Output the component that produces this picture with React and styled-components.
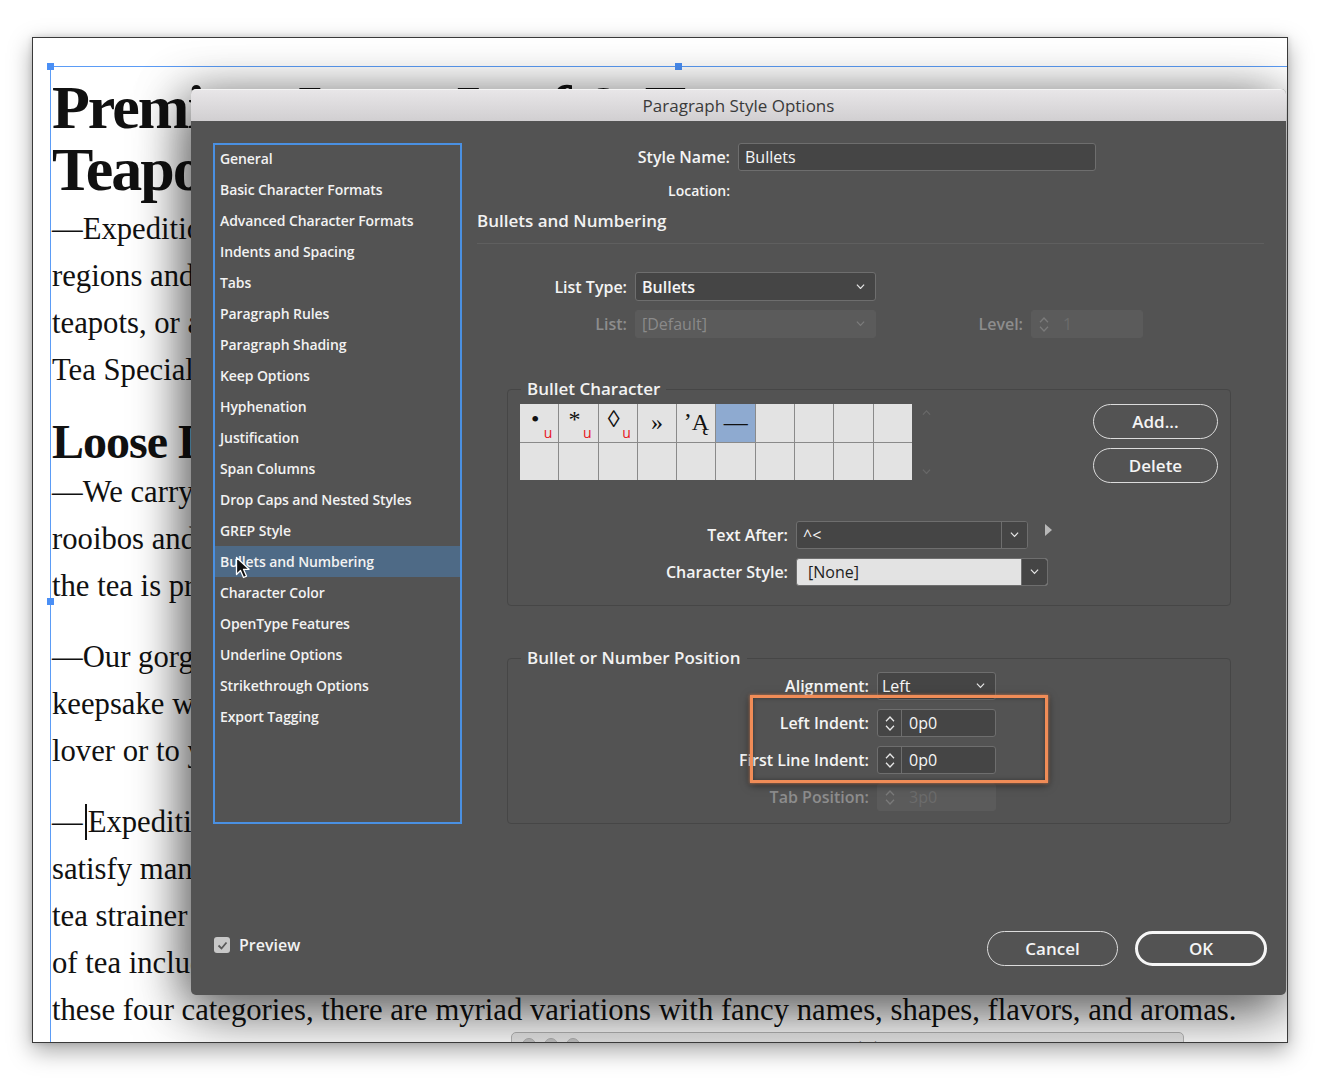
import React from 'react';
import styled, { createGlobalStyle } from 'styled-components';

const UI_FONT = `'Open Sans', 'Noto Sans', sans-serif`;
const DOC_FONT = `'Liberation Serif', 'Times New Roman', serif`;

const GlobalStyle = createGlobalStyle`
  html, body {
    margin: 0;
    padding: 0;
    background: #fff;
  }
  body {
    width: 1320px;
    height: 1080px;
    overflow: hidden;
  }
`;

/* ---------- document window ---------- */

const Window = styled.div`
  position: relative;
  box-sizing: border-box;
  width: 1256px;
  height: 1006px;
  margin: 37px 0 0 32px;
  border: 1px solid #3a3a3a;
  background: #fff;
  box-shadow: 0 8px 22px rgba(0, 0, 0, 0.35), 0 0 6px rgba(0, 0, 0, 0.15);
  overflow: hidden;
  display: flex;
  flex-direction: column;
`;

const TextFrame = styled.div`
  flex: 1;
  margin: 28px 0 0 17px;
  padding: 9px 0 0 1px;
  border-top: 1px solid #5b9cf6;
  border-left: 1px solid #5b9cf6;
  font-family: ${DOC_FONT};
  color: #111;
`;

const Headline = styled.h1`
  margin: 0;
  font-size: 62px;
  line-height: 62px;
  font-weight: 700;
  letter-spacing: -2px;
`;

const SubHead = styled.h2`
  margin: 21px 0 0;
  font-size: 48px;
  line-height: 54px;
  font-weight: 700;
  letter-spacing: -1px;
`;

const Para = styled.div`
  margin-top: ${({ $gap }) => $gap}px;
  font-size: 30.7px;
  line-height: 47px;
`;

const Line = styled.div`
  white-space: nowrap;
`;

const Caret = styled.span`
  display: inline-block;
  width: 2px;
  height: 36px;
  margin: 0 1px 0 2px;
  background: #111;
  vertical-align: -8px;
`;

const Handle = styled.div`
  position: absolute;
  left: ${({ $x }) => $x}px;
  top: ${({ $y }) => $y}px;
  width: 7px;
  height: 7px;
  background: #4a8ff5;
`;

const FindWindow = styled.div`
  position: absolute;
  left: 478px;
  top: 994px;
  width: 673px;
  height: 40px;
  box-sizing: border-box;
  border: 1px solid #b8b8b8;
  border-radius: 5px;
  background: linear-gradient(#ececec, #d4d4d4);
  display: flex;
  align-items: flex-start;
  padding: 5px 0 0 10px;
  gap: 8px;
  font: 12px ${UI_FONT};
  color: #888;
`;

const Light = styled.span`
  width: 12px;
  height: 12px;
  border-radius: 50%;
  background: #c4c4c4;
  border: 1px solid #b0b0b0;
`;

const FindTitle = styled.span`
  margin-left: 250px;
`;

/* ---------- dialog ---------- */

const Dialog = styled.div`
  position: absolute;
  left: 158px;
  top: 51px;
  width: 1095px;
  height: 906px;
  z-index: 2;
  display: flex;
  flex-direction: column;
  background: #535353;
  border-radius: 5px;
  box-shadow: 0 22px 55px rgba(0, 0, 0, 0.5), -10px 0 45px rgba(0, 0, 0, 0.35);
  font-family: ${UI_FONT};
  color: #f2f2f2;
`;

const TitleBar = styled.div`
  height: 32px;
  flex-shrink: 0;
  border-radius: 5px 5px 0 0;
  border-top: 1px solid #f4f4f4;
  box-sizing: border-box;
  background: linear-gradient(#e8e6e8, #d1cfd1);
  display: flex;
  align-items: center;
  justify-content: center;
  font-size: 17px;
  color: #3a3a3a;
`;

const DialogBody = styled.div`
  flex: 1;
  display: flex;
  flex-direction: column;
  padding: 22px 0 0 22px;
`;

const Main = styled.div`
  display: flex;
  gap: 15px;
`;

const Sidebar = styled.div`
  box-sizing: border-box;
  width: 249px;
  height: 681px;
  border: 2px solid #4a90e2;
`;

const SideList = styled.div`
  margin-top: -2px;
`;

const SideItem = styled.div`
  height: 31px;
  line-height: 31px;
  padding-left: 5px;
  font-size: 14px;
  font-weight: 600;
  letter-spacing: -0.1px;
  white-space: nowrap;
  background: ${({ $active }) => ($active ? '#4e6a86' : 'transparent')};
`;

const Panel = styled.div`
  width: 787px;
  display: flex;
  flex-direction: column;
`;

const Row = styled.div`
  display: flex;
  align-items: center;
  gap: 8px;
  margin-top: ${({ $gap }) => $gap || 0}px;
`;

const Label = styled.div`
  width: ${({ $w }) => $w}px;
  text-align: right;
  font-size: ${({ $small }) => ($small ? 14 : 16)}px;
  font-weight: 600;
  white-space: nowrap;
  color: ${({ $disabled }) => ($disabled ? '#8d8d8d' : '#f4f4f4')};
  line-height: 20px;
`;

const SectionTitle = styled.div`
  margin-top: 9px;
  font-size: 17px;
  font-weight: 600;
  line-height: 22px;
`;

const Separator = styled.div`
  margin-top: 11px;
  height: 1px;
  background: #5f5f5f;
`;

const Field = styled.div`
  box-sizing: border-box;
  width: ${({ $w }) => $w}px;
  height: ${({ $h }) => $h || 28}px;
  display: flex;
  align-items: center;
  border-radius: 3px;
  border: 1px solid ${({ $disabled }) => ($disabled ? '#5b5b5b' : '#6e6e6e')};
  background: ${({ $disabled, $light }) =>
    $disabled ? '#5b5b5b' : $light ? '#e3e3e3' : '#454545'};
  color: ${({ $disabled, $light }) =>
    $disabled ? '#8a8a8a' : $light ? '#1e1e1e' : '#f5f5f5'};
  font-size: 16px;
  font-weight: ${({ $bold }) => ($bold ? 600 : 400)};
  overflow: hidden;
`;

const FieldText = styled.span`
  flex: 1;
  padding-left: ${({ $pad }) => $pad || 6}px;
  white-space: nowrap;
`;

const FieldArrow = styled.span`
  width: 26px;
  display: flex;
  justify-content: center;
  padding-right: 2px;
`;

const DropPart = styled.span`
  align-self: stretch;
  width: 25px;
  display: flex;
  align-items: center;
  justify-content: center;
  background: #454545;
  border-left: 1px solid #6e6e6e;
`;

const SpinPart = styled.span`
  align-self: stretch;
  width: 23px;
  display: flex;
  flex-direction: column;
  align-items: center;
  justify-content: center;
  gap: 3px;
  border-right: 1px solid ${({ $disabled }) => ($disabled ? '#5b5b5b' : '#6e6e6e')};
`;

const Group = styled.fieldset`
  box-sizing: border-box;
  width: 724px;
  min-width: 0;
  margin: ${({ $gap }) => $gap}px 0 0 30px;
  padding: ${({ $pad }) => $pad};
  border: 1px solid #464646;
  border-radius: 4px;
`;

const Legend = styled.legend`
  margin-left: 1px;
  padding: 0 6px;
  font-size: 17px;
  font-weight: 600;
  line-height: 20px;
  color: #f2f2f2;
`;

const CharRow = styled.div`
  display: flex;
  align-items: flex-start;
`;

const CharGrid = styled.div`
  width: 392px;
  height: 76px;
  display: grid;
  grid-template-columns: repeat(10, 1fr);
  grid-template-rows: repeat(2, 1fr);
  gap: 1px;
  background: #8a8a8a;
`;

const CharCell = styled.div`
  position: relative;
  display: flex;
  align-items: center;
  justify-content: center;
  padding: ${({ $hasU }) => ($hasU ? '0 8px 6px 0' : '0')};
  background: ${({ $selected }) => ($selected ? '#8eaad0' : '#e3e3e3')};
  font-family: ${DOC_FONT};
  font-size: 24px;
  color: #111;
`;

const UMark = styled.span`
  position: absolute;
  right: 6px;
  bottom: 0;
  font: 14px ${UI_FONT};
  color: #e8141c;
`;

const GridScroll = styled.div`
  height: 76px;
  width: 24px;
  margin-left: 2px;
  display: flex;
  flex-direction: column;
  justify-content: space-between;
  align-items: center;
  padding: 6px 0;
  box-sizing: border-box;
`;

const ButtonCol = styled.div`
  margin-left: auto;
  display: flex;
  flex-direction: column;
  gap: 9px;
`;

const PillButton = styled.button`
  box-sizing: border-box;
  width: ${({ $w }) => $w}px;
  height: 35px;
  border-radius: 18px;
  border: ${({ $strong }) => ($strong ? '3px solid #f6f6f6' : '1.5px solid #dcdcdc')};
  background: transparent;
  color: #f4f4f4;
  font-family: ${UI_FONT};
  font-size: 17px;
  font-weight: 600;
  padding: 0;
`;

const MoreArrow = styled.span`
  margin: -10px 0 0 9px;
  width: 0;
  height: 0;
  border-top: 6px solid transparent;
  border-bottom: 6px solid transparent;
  border-left: 7px solid #b8b8b8;
`;

const Footer = styled.div`
  margin-top: auto;
  display: flex;
  align-items: center;
  padding: 0 19px 29px 1px;
`;

const CheckWrap = styled.label`
  display: flex;
  align-items: center;
  gap: 9px;
  margin-bottom: 7px;
  font-size: 16px;
  font-weight: 600;
`;

const CheckBox = styled.span`
  width: 16px;
  height: 16px;
  border-radius: 3px;
  background: #c8c8c8;
  display: flex;
  align-items: center;
  justify-content: center;
`;

const FooterButtons = styled.div`
  margin-left: auto;
  display: flex;
  gap: 17px;
`;

const Highlight = styled.div`
  position: absolute;
  left: 559px;
  top: 606px;
  width: 298px;
  height: 88px;
  box-sizing: border-box;
  border: 3px solid #f08c57;
  box-shadow: 0 0 3px rgba(240, 140, 87, 0.8), 0 2px 8px rgba(0, 0, 0, 0.55),
    inset 0 0 4px rgba(0, 0, 0, 0.35);
  pointer-events: none;
`;

const Pointer = styled.svg`
  position: absolute;
  left: 44px;
  top: 467px;
`;

/* ---------- small drawings ---------- */

const Chevron = ({ up, color = '#e6e6e6', size = 9 }) => (
  <svg width={size} height={size * 0.6} viewBox="0 0 10 6">
    <path
      d={up ? 'M1 5.2L5 1l4 4.2' : 'M1 0.8L5 5l4-4.2'}
      fill="none"
      stroke={color}
      strokeWidth="1.3"
    />
  </svg>
);

const Spinner = ({ value, disabled, w }) => (
  <Field $w={w} $disabled={disabled}>
    <SpinPart $disabled={disabled}>
      <Chevron up color={disabled ? '#7a7a7a' : '#e6e6e6'} size={10} />
      <Chevron color={disabled ? '#7a7a7a' : '#e6e6e6'} size={10} />
    </SpinPart>
    <FieldText $pad={7} style={disabled ? { color: '#6c6c6c' } : undefined}>
      {value}
    </FieldText>
  </Field>
);

const sideItems = [
  'General',
  'Basic Character Formats',
  'Advanced Character Formats',
  'Indents and Spacing',
  'Tabs',
  'Paragraph Rules',
  'Paragraph Shading',
  'Keep Options',
  'Hyphenation',
  'Justification',
  'Span Columns',
  'Drop Caps and Nested Styles',
  'GREP Style',
  'Bullets and Numbering',
  'Character Color',
  'OpenType Features',
  'Underline Options',
  'Strikethrough Options',
  'Export Tagging',
];

const bulletChars = [
  { g: '•', u: true },
  { g: '*', u: true },
  { g: '◊', u: true },
  { g: '»' },
  { g: 'ʼĄ' },
  { g: '—', selected: true },
  {}, {}, {}, {},
  {}, {}, {}, {}, {}, {}, {}, {}, {}, {},
];

const App = () => {
  return (
    <>
      <GlobalStyle />
      <Window>
        <TextFrame>
          <Headline>
            <Line>Premium Loose Leaf &amp; Teas</Line>
            <Line>Teapots and Accessories</Line>
          </Headline>
          <Para $gap={6}>
            <Line>—Expedition Tea Company sells premium loose leaf teas from the finest</Line>
            <Line>regions and estates. Choose from black, green, white and oolong teas,</Line>
            <Line>teapots, or accessories to brew the perfect cup from our</Line>
            <Line>Tea Specialists who taste every lot before it reaches you.</Line>
          </Para>
          <SubHead>Loose Leaf Teas</SubHead>
          <Para $gap={0}>
            <Line>—We carry a full range of black, green, white and oolong teas as well as</Line>
            <Line>rooibos and herbal infusions. Each lot is tasted and graded so that</Line>
            <Line>the tea is prepared and packed with care.</Line>
          </Para>
          <Para $gap={24}>
            <Line>—Our gorgeous cast iron teapots make a wonderful</Line>
            <Line>keepsake when you give them as gifts to the tea</Line>
            <Line>lover or to yourself.</Line>
          </Para>
          <Para $gap={24}>
            <Line>
              —<Caret />Expedition Tea Company offers a variety of teas to
            </Line>
            <Line>satisfy many tastes. Each order comes with a free</Line>
            <Line>tea strainer and a tasting guide. The main categories</Line>
            <Line>of tea include black, green, white and oolong. Within</Line>
            <Line>these four categories, there are myriad variations with fancy names, shapes, flavors, and aromas.</Line>
          </Para>
        </TextFrame>

        <Handle $x={14} $y={25} />
        <Handle $x={642} $y={25} />
        <Handle $x={14} $y={560} />

        <FindWindow>
          <Light />
          <Light />
          <Light />
          <FindTitle>Find/Change</FindTitle>
        </FindWindow>

        <Dialog>
          <TitleBar>Paragraph Style Options</TitleBar>
          <DialogBody>
            <Main>
              <Sidebar>
                <SideList>
                  {sideItems.map((item) => (
                    <SideItem key={item} $active={item === 'Bullets and Numbering'}>
                      {item}
                    </SideItem>
                  ))}
                </SideList>
              </Sidebar>

              <Panel>
                <Row>
                  <Label $w={253}>Style Name:</Label>
                  <Field $w={358}>
                    <FieldText>Bullets</FieldText>
                  </Field>
                </Row>
                <Row $gap={10}>
                  <Label $w={253} $small>
                    Location:
                  </Label>
                </Row>
                <SectionTitle>Bullets and Numbering</SectionTitle>
                <Separator />

                <Row $gap={28}>
                  <Label $w={150}>List Type:</Label>
                  <Field $w={241} $h={29} $bold>
                    <FieldText>Bullets</FieldText>
                    <FieldArrow>
                      <Chevron />
                    </FieldArrow>
                  </Field>
                </Row>
                <Row $gap={9}>
                  <Label $w={150} $disabled>
                    List:
                  </Label>
                  <Field $w={241} $disabled>
                    <FieldText>[Default]</FieldText>
                    <FieldArrow>
                      <Chevron color="#7c7c7c" />
                    </FieldArrow>
                  </Field>
                  <Label $w={139} $disabled>
                    Level:
                  </Label>
                  <Spinner w={112} value="1" disabled />
                </Row>

                <Group $gap={41} $pad="5px 12px 19px 12px">
                  <Legend>Bullet Character</Legend>
                  <CharRow>
                    <CharGrid>
                      {bulletChars.map((c, i) => (
                        <CharCell key={i} $hasU={c.u} $selected={c.selected}>
                          {c.g}
                          {c.u && <UMark>u</UMark>}
                        </CharCell>
                      ))}
                    </CharGrid>
                    <GridScroll>
                      <Chevron up color="#686868" />
                      <Chevron color="#686868" />
                    </GridScroll>
                    <ButtonCol>
                      <PillButton $w={125}>Add...</PillButton>
                      <PillButton $w={125}>Delete</PillButton>
                    </ButtonCol>
                  </CharRow>
                  <Row $gap={38}>
                    <Label $w={268}>Text After:</Label>
                    <Field $w={232}>
                      <FieldText>^&lt;</FieldText>
                      <DropPart>
                        <Chevron />
                      </DropPart>
                    </Field>
                    <MoreArrow />
                  </Row>
                  <Row $gap={9}>
                    <Label $w={268}>Character Style:</Label>
                    <Field $w={252} $light>
                      <FieldText $pad={11}>[None]</FieldText>
                      <DropPart>
                        <Chevron />
                      </DropPart>
                    </Field>
                  </Row>
                </Group>

                <Group $gap={42} $pad="4px 12px 12px 12px">
                  <Legend>Bullet or Number Position</Legend>
                  <Row>
                    <Label $w={349}>Alignment:</Label>
                    <Field $w={119}>
                      <FieldText $pad={4}>Left</FieldText>
                      <FieldArrow>
                        <Chevron />
                      </FieldArrow>
                    </Field>
                  </Row>
                  <Row $gap={9}>
                    <Label $w={349}>Left Indent:</Label>
                    <Spinner w={119} value="0p0" />
                  </Row>
                  <Row $gap={9}>
                    <Label $w={349}>First Line Indent:</Label>
                    <Spinner w={119} value="0p0" />
                  </Row>
                  <Row $gap={9}>
                    <Label $w={349} $disabled>
                      Tab Position:
                    </Label>
                    <Spinner w={119} value="3p0" disabled />
                  </Row>
                </Group>
              </Panel>
            </Main>

            <Footer>
              <CheckWrap>
                <CheckBox>
                  <svg width="11" height="9" viewBox="0 0 11 9">
                    <path d="M1.5 4.5l3 3 5-6" fill="none" stroke="#5a5a5a" strokeWidth="1.8" />
                  </svg>
                </CheckBox>
                Preview
              </CheckWrap>
              <FooterButtons>
                <PillButton $w={131}>Cancel</PillButton>
                <PillButton $w={132} $strong>
                  OK
                </PillButton>
              </FooterButtons>
            </Footer>
          </DialogBody>

          <Highlight />
          <Pointer width="16" height="24" viewBox="0 0 16 24">
            <path
              d="M1.5 1.5v17l4-4 3 7 3-1.4-3-6.8h5.6z"
              fill="#111"
              stroke="#fff"
              strokeWidth="1.3"
              strokeLinejoin="round"
            />
          </Pointer>
        </Dialog>
      </Window>
    </>
  );
};

export default App;
